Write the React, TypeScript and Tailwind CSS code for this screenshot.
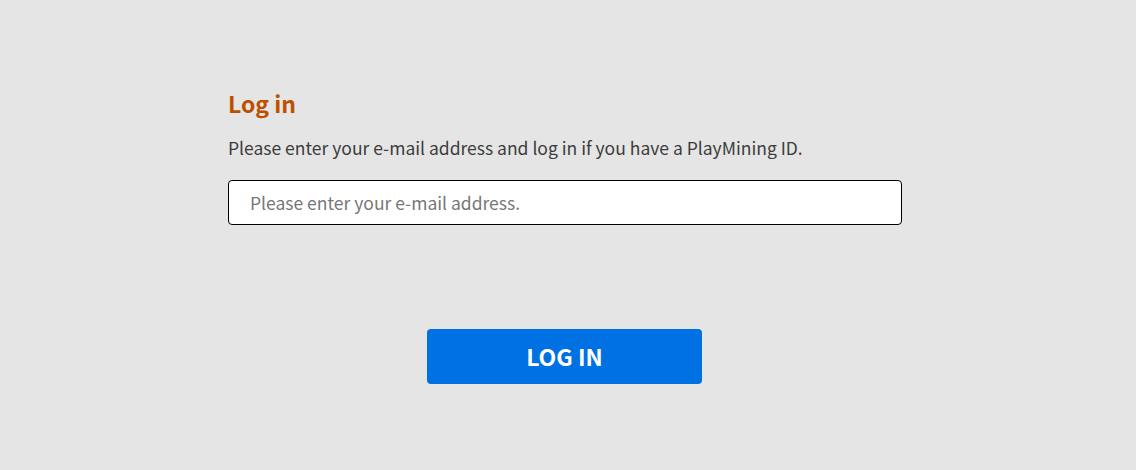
export default function App() {
  return (
    <div
      className="min-h-[470px] w-full bg-[#e5e5e5] text-[#333]"
      style={{ fontFamily: '"Noto Sans CJK JP", "Noto Sans", sans-serif' }}
    >
      <div className="ml-[228px] w-[674px] pt-[85px]">
        <h1 className="text-[23px] font-bold leading-[36px] text-[#bd5000]">Log in</h1>
        <p className="mt-[13px] text-[17.5px] leading-[27px] text-[#3c3c3c]">
          Please enter your e-mail address and log in if you have a PlayMining ID.
        </p>
        <input
          type="email"
          placeholder="Please enter your e-mail address."
          className="mt-[19px] block h-[45px] w-full rounded-[4px] border border-black bg-white px-[21px] text-[17.5px] text-[#333] outline-none placeholder:text-[#777]"
        />
        <div className="flex justify-center pt-[104px] pr-[1px]">
          <button
            type="button"
            className="h-[55px] w-[275px] rounded-[4px] bg-[#0071e3] text-[23px] font-bold text-white"
          >
            LOG IN
          </button>
        </div>
      </div>
    </div>
  )
}
